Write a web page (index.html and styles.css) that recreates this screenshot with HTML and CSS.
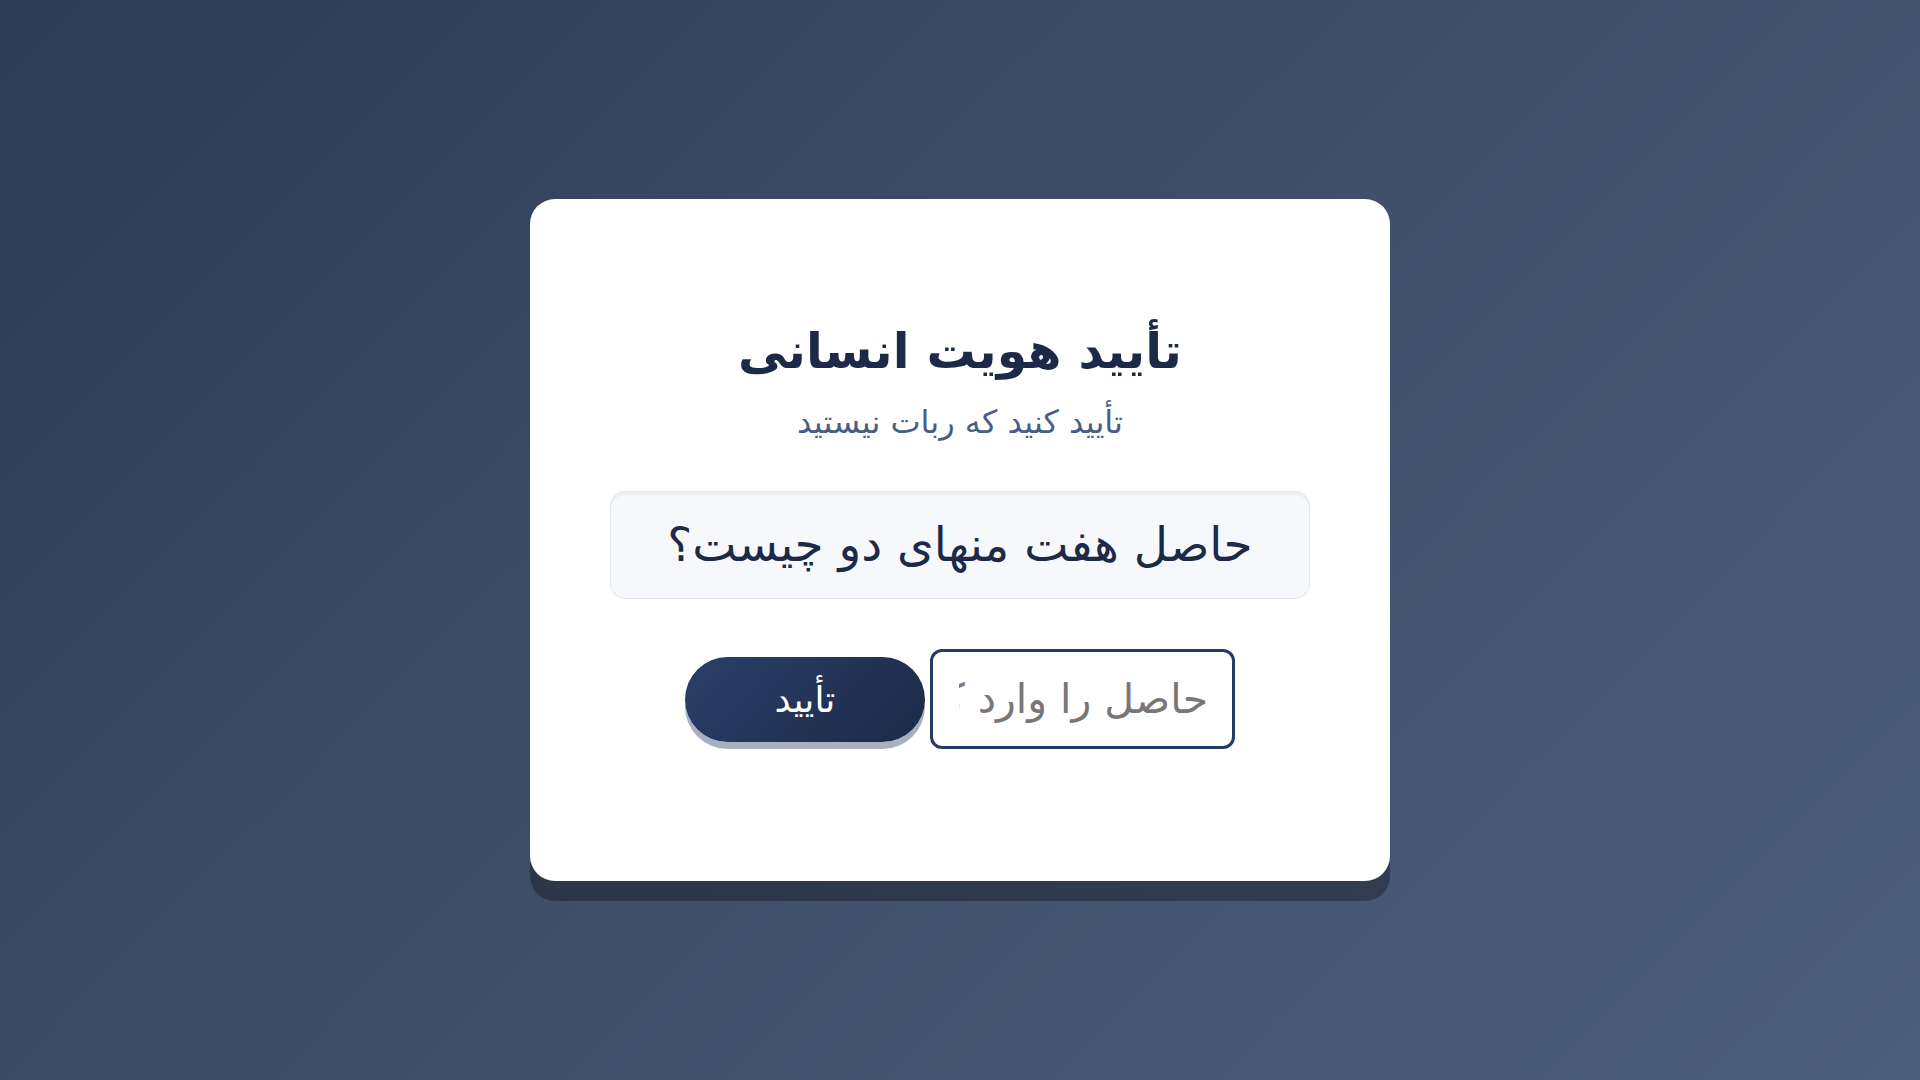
FILE: index.html
```html
<!DOCTYPE html>
<html lang="fa" dir="rtl">
<head>
<meta charset="utf-8">
<title>تأیید هویت انسانی</title>
<link rel="stylesheet" href="styles.css">
</head>
<body>
<main class="card">
  <h1 class="title">تأیید هویت انسانی</h1>
  <p class="subtitle">تأیید کنید که ربات نیستید</p>
  <div class="question">حاصل هفت منهای دو چیست؟</div>
  <form class="controls">
    <input class="answer" type="text" placeholder="حاصل را وارد کنید">
    <button class="submit" type="button">تأیید</button>
  </form>
</main>
</body>
</html>
```

FILE: styles.css
```css
html, body {
  margin: 0;
  padding: 0;
  height: 100%;
}
body {
  font-family: "DejaVu Sans", sans-serif;
  background: linear-gradient(135deg, #2d3b55 0%, #3f4f6a 50%, #4b5e7b 100%);
  display: flex;
  align-items: center;
  justify-content: center;
  min-height: 100vh;
}
.card {
  width: 860px;
  box-sizing: border-box;
  padding: 124px 80px 132px;
  background: #ffffff;
  border-radius: 25px;
  box-shadow: 0 20px 0 rgba(0, 0, 0, 0.3);
  display: flex;
  flex-direction: column;
  align-items: center;
}
.title {
  margin: 0 0 21px;
  font-size: 49px;
  line-height: 1.2;
  font-weight: bold;
  color: #1c2a47;
}
.subtitle {
  margin: 0 0 50px;
  font-size: 32px;
  line-height: 1.2;
  color: #4a5d85;
}
.question {
  width: 100%;
  box-sizing: border-box;
  padding: 25px 20px;
  border: 1px solid #e2e6ee;
  border-radius: 15px;
  background: #f7f8fc;
  box-shadow: inset 0 3px 0 rgba(0, 0, 0, 0.035);
  text-align: center;
  font-size: 47px;
  line-height: 1.2;
  color: #1c2a47;
}
.controls {
  margin: 50px 0 0;
  display: flex;
  align-items: center;
  gap: 5px;
}
.answer {
  width: 305px;
  height: 100px;
  box-sizing: border-box;
  border: 3px solid #263a62;
  border-radius: 12px;
  padding: 0 24px 0 26px;
  background: #ffffff;
  font-family: "DejaVu Sans", sans-serif;
  font-size: 41px;
  color: #1c2a47;
  direction: rtl;
  outline: none;
}
.answer::placeholder {
  color: #777777;
  opacity: 1;
}
.submit {
  width: 240px;
  height: 85px;
  border: none;
  border-radius: 43px;
  background: linear-gradient(135deg, #2a3f69 0%, #1c2a47 100%);
  box-shadow: 0 7px 0 #a7afc0;
  color: #ffffff;
  font-family: "DejaVu Sans", sans-serif;
  font-size: 36px;
  cursor: pointer;
}
```
